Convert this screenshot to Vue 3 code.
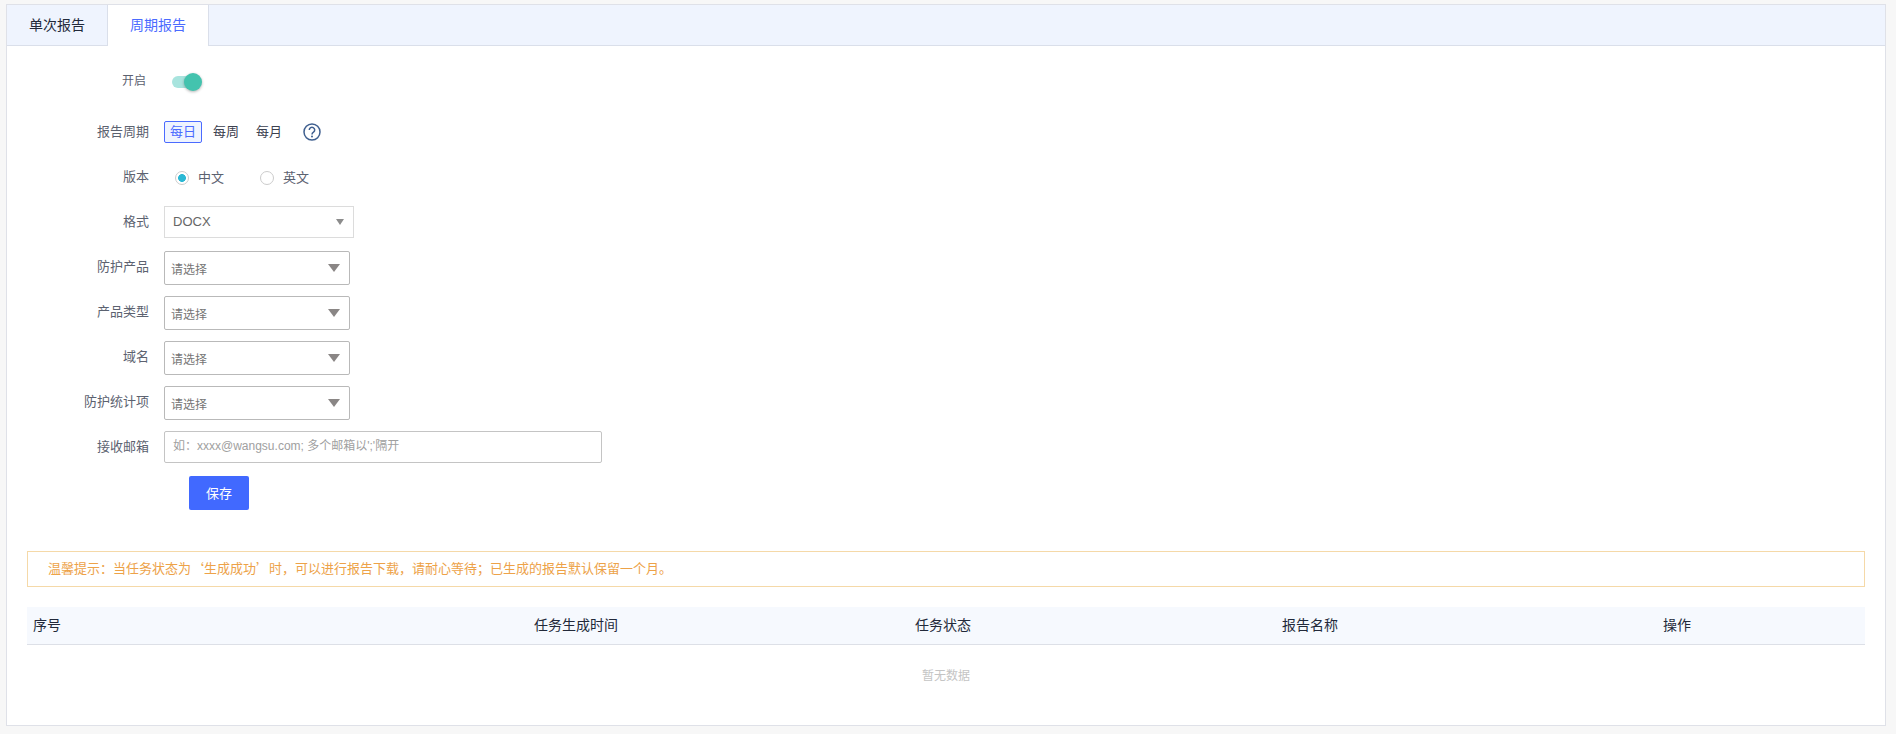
<script setup>
const selects = [
  { label: '防护产品' },
  { label: '产品类型' },
  { label: '域名' },
  { label: '防护统计项' },
]
const columns = [
  { text: '序号', cls: 'c1' },
  { text: '任务生成时间', cls: 'c2' },
  { text: '任务状态', cls: 'c3' },
  { text: '报告名称', cls: 'c4' },
  { text: '操作', cls: 'c5' },
]
</script>

<template>
  <div class="page">
    <div class="card">
      <div class="tabs">
        <div class="tab first">单次报告</div>
        <div class="tab active">周期报告</div>
      </div>
      <div class="body">
        <div class="row r-switch">
          <div class="label small">开启</div>
          <div class="switch"><span class="track"></span><span class="knob"></span></div>
        </div>
        <div class="row r-period">
          <div class="label">报告周期</div>
          <div class="periods">
            <span class="period on">每日</span>
            <span class="period">每周</span>
            <span class="period">每月</span>
          </div>
          <svg class="help" width="18" height="18" viewBox="0 0 18 18">
            <circle cx="9" cy="9" r="8" fill="none" stroke="#3f5f8f" stroke-width="1.5" />
            <path d="M6.3 7a2.7 2.7 0 1 1 4.2 2.2c-1 .7-1.5 1.1-1.5 2.2" fill="none" stroke="#3f5f8f" stroke-width="1.5" />
            <circle cx="9" cy="13.4" r="1" fill="#3f5f8f" />
          </svg>
        </div>
        <div class="row r-radio">
          <div class="label up">版本</div>
          <label class="radio"><span class="dot checked"></span><span class="radio-text">中文</span></label>
          <label class="radio"><span class="dot"></span><span class="radio-text">英文</span></label>
        </div>
        <div class="row r-format">
          <div class="label">格式</div>
          <div class="format"><span class="format-text">DOCX</span><i class="arrow-s"></i></div>
        </div>
        <div v-for="s in selects" :key="s.label" class="row r-select">
          <div class="label up">{{ s.label }}</div>
          <div class="select"><span>请选择</span><i class="arrow-l"></i></div>
        </div>
        <div class="row r-mail">
          <div class="label">接收邮箱</div>
          <div class="mail">如：xxxx@wangsu.com; 多个邮箱以';'隔开</div>
        </div>
        <button class="save" type="button">保存</button>
        <div class="alert">温馨提示：当任务状态为‘生成成功’时，可以进行报告下载，请耐心等待；已生成的报告默认保留一个月。</div>
        <div class="thead">
          <div v-for="c in columns" :key="c.text" class="th" :class="c.cls">{{ c.text }}</div>
        </div>
        <div class="empty">暂无数据</div>
      </div>
    </div>
  </div>
</template>

<style>
html, body { margin: 0; background: #f7f7f7; }
</style>

<style scoped>
.page {
  height: 734px;
  box-sizing: border-box;
  padding: 4px 10px 8px 6px;
  background: #f7f7f7;
  font-family: "Liberation Sans", "Noto Sans CJK SC", sans-serif;
  overflow: hidden;
}
.card {
  height: 722px;
  box-sizing: border-box;
  border: 1px solid #dfe1e8;
  background: #fff;
}
.tabs {
  display: flex;
  height: 41px;
  box-sizing: border-box;
  background: #eff4fe;
  border-bottom: 1px solid #dadfea;
}
.tab {
  width: 101px;
  height: 40px;
  box-sizing: border-box;
  text-align: center;
  line-height: 40px;
  font-size: 14px;
  color: #22293a;
}
.tab.first { border-right: 1px solid #dadfea; }
.tab.active {
  height: 41px;
  background: #fff;
  color: #4b6bff;
  border-right: 1px solid #dadfea;
}
.body { padding: 0 20px; }
.row { display: flex; align-items: center; }
.label {
  width: 142px;
  margin-left: -20px;
  padding-right: 15px;
  padding-bottom: 3px;
  text-align: right;
  font-size: 13px;
  color: #5c6270;
  flex: none;
}
.label.up { padding-bottom: 6px; }
.label.small { width: 139px; font-size: 12px; padding-right: 18px; }
.r-switch { height: 28px; margin-top: 21px; }
.switch { position: relative; width: 30px; height: 14px; margin-left: 8px; }
.track {
  position: absolute; left: 0; top: 2px;
  width: 27px; height: 12px;
  border-radius: 6px;
  background: #a8e4de;
}
.knob {
  position: absolute; left: 12px; top: -1px;
  width: 18px; height: 18px;
  border-radius: 50%;
  background: #43c3ae;
  box-shadow: 0 1px 3px rgba(0,0,0,.3);
}
.r-period { height: 22px; margin-top: 26px; }
.periods { display: flex; }
.period {
  height: 22px;
  box-sizing: border-box;
  padding: 0 5px;
  line-height: 20px;
  margin-right: 5px;
  font-size: 13px;
  color: #3c4150;
  border: 1px solid transparent;
  border-radius: 2px;
}
.period.on {
  color: #4b6bff;
  background: #eff4fe;
  border-color: #4b6bff;
}
.help { margin-left: 10px; }
.r-radio { height: 22px; margin-top: 24px; }
.radio {
  display: flex;
  align-items: center;
  width: 85px;
  margin-left: 11px;
  font-size: 13px;
  color: #5c6270;
}
.radio + .radio { margin-left: 0; }
.radio-text { padding-bottom: 3px; margin-left: -1px; }
.dot {
  width: 14px; height: 14px;
  box-sizing: border-box;
  border: 1px solid #ccc;
  border-radius: 50%;
  margin-right: 10px;
  background: #fff;
  flex: none;
}
.dot.checked {
  background: radial-gradient(circle, #2bb8d4 0 3.6px, #fff 4.2px);
}
.r-format { height: 32px; margin-top: 17px; }
.format {
  width: 190px; height: 32px;
  box-sizing: border-box;
  border: 1px solid #dcdcdc;
  padding: 0 9px 0 8px;
  display: flex; align-items: center; justify-content: space-between;
  font-size: 13px;
  color: #666;
}
.format-text { padding-bottom: 2px; }
.arrow-s {
  width: 0; height: 0;
  margin-top: -1px;
  border-left: 4px solid transparent;
  border-right: 4px solid transparent;
  border-top: 6px solid #8c8c8c;
}
.r-select { height: 34px; margin-top: 11px; }
.r-format + .r-select { margin-top: 13px; }
.select {
  width: 186px; height: 34px;
  box-sizing: border-box;
  border: 1px solid #b9b9b9;
  border-radius: 2px;
  padding: 0 9px 0 6px;
  display: flex; align-items: center; justify-content: space-between;
  font-size: 12px;
  color: #757575;
}
.arrow-l {
  width: 0; height: 0;
  border-left: 6px solid transparent;
  border-right: 6px solid transparent;
  border-top: 8px solid #8a8685;
}
.r-mail { height: 32px; margin-top: 11px; }
.mail {
  width: 438px; height: 32px;
  box-sizing: border-box;
  border: 1px solid #c4c4c4;
  border-radius: 2px;
  padding: 0 8px;
  line-height: 29px;
  font-size: 12px;
  color: #a0a0a0;
}
.save {
  display: block;
  width: 60px; height: 34px;
  margin: 13px 0 0 162px;
  padding: 0 0 2px;
  border: 0;
  border-radius: 2px;
  background: #4169ff;
  color: #fff;
  font-family: inherit;
  font-size: 13px;
}
.alert {
  height: 36px;
  box-sizing: border-box;
  margin-top: 41px;
  border: 1px solid #f5d9a8;
  padding-left: 20px;
  line-height: 32px;
  font-family: "Noto Sans CJK SC", sans-serif;
  font-size: 13px;
  color: #eda248;
}
.thead {
  display: grid;
  grid-template-columns: 365.5px repeat(4, 367px);
  height: 38px;
  box-sizing: border-box;
  margin-top: 20px;
  background: #f6f9fe;
  border-bottom: 1px solid #dde0e7;
  align-items: center;
}
.th { font-size: 14px; color: #22293a; padding-bottom: 4px; }
.c1 { padding-left: 6px; }
.empty {
  padding-top: 21px;
  text-align: center;
  font-size: 12px;
  color: #c4c4c4;
}
.c2, .c3, .c4, .c5 { text-align: center; }
</style>
